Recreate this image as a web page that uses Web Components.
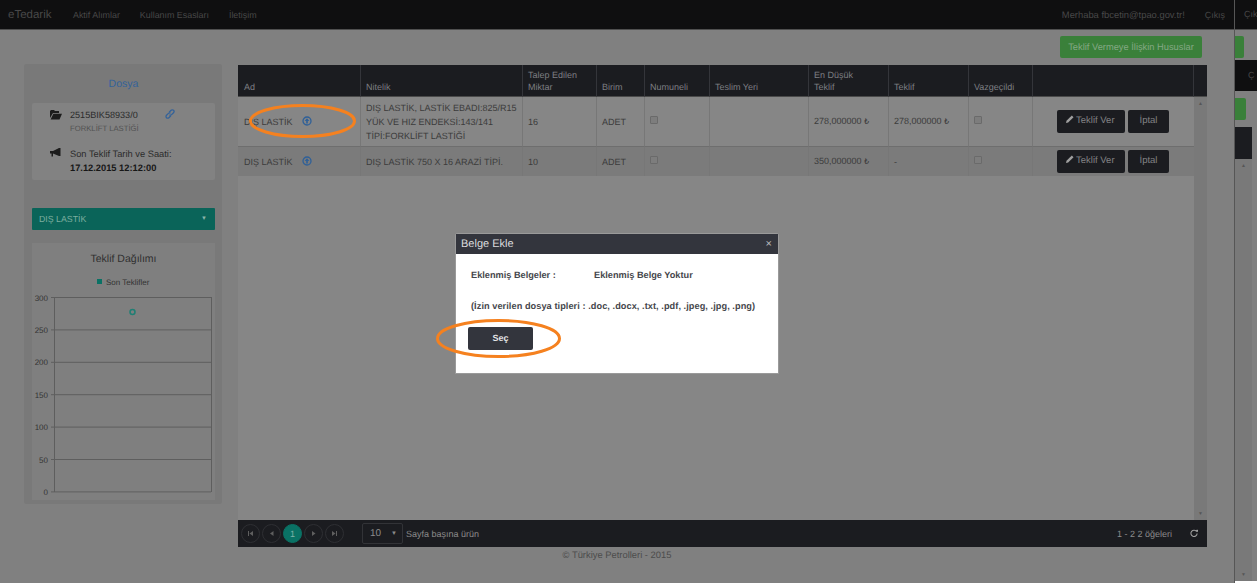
<!DOCTYPE html>
<html lang="tr">
<head>
<meta charset="utf-8">
<title>eTedarik</title>
<style>
  html, body { margin: 0; padding: 0; background: #808080; }
  body { font-family: "Liberation Sans", Arial, sans-serif; text-rendering: geometricPrecision; }
</style>
</head>
<body>
<app-shell></app-shell>
<script>
const icons = {
    folder: '<svg width="12" height="10" viewBox="0 0 12 10"><path fill="#1c1c1c" d="M1 0h3l1 1h4v2H3L0 8V1zM3.400 3.800H12L9.500 9.500H.6z"/></svg>',
    link: '<svg width="10" height="10" viewBox="0 0 10 10" fill="none" stroke="#33629a" stroke-width="1.300"><path d="M4.200 3.200 6.100 1.300a1.500 1.500 0 0 1 2.400 2.400L6.600 5.600a1.500 1.500 0 0 1-2.100.1"/><path d="M5.800 6.800 3.900 8.700a1.500 1.500 0 0 1-2.400-2.400l1.900-1.900a1.500 1.500 0 0 1 2.100-.1"/></svg>',
    bullhorn: '<svg width="11" height="9" viewBox="0 0 11 9"><path fill="#1c1c1c" d="M0 3h3l6-3h1.500v8H9L3 5.500v3H1.500v-3H0z"/></svg>',
    upload: '<svg width="10" height="10" viewBox="0 0 10 10"><circle cx="5" cy="5" r="4" fill="none" stroke="#2f6098" stroke-width="1.300"/><path fill="#2f6098" d="M5 2.300 7.300 5H5.800v2.500H4.200V5H2.700z"/></svg>',
    pencil: '<svg width="8" height="8" viewBox="0 0 8 8"><path fill="#a0a0a0" d="M0 8l.5-2.200L5.800.5l1.700 1.700L2.200 7.500z"/></svg>',
    refresh: '<svg width="8" height="9" viewBox="0 0 9 9" fill="none" stroke="#a0a0a0" stroke-width="1.200"><path d="M7.500 2.500A3.500 3.500 0 1 0 8 4.500"/><path fill="#a0a0a0" stroke="none" d="M6 .5 9 .2v3z"/></svg>'
}

class TopNav extends HTMLElement {
    constructor() {
        super()
        this.attachShadow({ mode: 'open' })
    }
    connectedCallback() {
        this.shadowRoot.innerHTML = `
            <style>
                :host {
                    display: flex;
                    align-items: center;
                    box-sizing: border-box;
                    height: 30px;
                    padding: 0 9px 0 8px;
                    background: #0f0f10;
                    border-bottom: 1px solid #4f4f4f;
                    color: #484848;
                    font-size: 8.900px;
                    white-space: nowrap;
                }
                .brand { font-size: 11.500px; width: 65px; }
                a { margin-right: 20px; }
                .spacer { flex: 1; }
                .user { margin-right: 20px; font-size: 9.400px; }
                a:last-child { margin-right: 0; }
            </style>
            <span class="brand">eTedarik</span>
            <a>Aktif Alımlar</a>
            <a>Kullanım Esasları</a>
            <a>İletişim</a>
            <span class="spacer"></span>
            <span class="user">Merhaba fbcetin@tpao.gov.tr!</span>
            <a>Çıkış</a>
        `
    }
}
customElements.define('top-nav', TopNav)

class GreenButton extends HTMLElement {
    constructor() {
        super()
        this.attachShadow({ mode: 'open' })
    }
    connectedCallback() {
        this.shadowRoot.innerHTML = `
            <style>
                :host {
                    display: inline-block;
                    box-sizing: border-box;
                    height: 22px;
                    width: 142px;
                    line-height: 22px;
                    text-align: center;
                    border-radius: 2px;
                    background: #3a803a;
                    color: #84a884;
                    font-size: 9.300px;
                    white-space: nowrap;
                }
            </style>
            <slot></slot>
        `
    }
}
customElements.define('green-button', GreenButton)

class DossierPanel extends HTMLElement {
    constructor() {
        super()
        this.attachShadow({ mode: 'open' })
    }
    connectedCallback() {
        this.shadowRoot.innerHTML = `
            <style>
                :host {
                    display: block;
                    box-sizing: border-box;
                    width: 198px;
                    height: 440px;
                    padding: 0 7px 0 8px;
                    background: #797979;
                    border-radius: 2px;
                    color: #2b2b2b;
                    font-size: 9.100px;
                }
                h2 {
                    margin: 0;
                    height: 39px;
                    line-height: 40px;
                    text-align: center;
                    font-size: 10.500px;
                    font-weight: normal;
                    color: #33629a;
                }
                .card {
                    box-sizing: border-box;
                    height: 77px;
                    padding: 6px 0 0 18px;
                    background: #828282;
                    border-radius: 2px;
                }
                .item { display: flex; position: relative; }
                .item .ic { width: 20px; flex: none; padding-top: 1px; }
                .item + .item { margin-top: 12px; }
                .code { line-height: 13px; }
                .sub { color: #525252; font-size: 7.700px; line-height: 13px; }
                .deadline { line-height: 14px; font-size: 9.300px; }
                .deadline b { color: #171717; }
                .link { position: absolute; left: 115px; top: 0; }
                .bar {
                    display: flex;
                    justify-content: space-between;
                    align-items: center;
                    box-sizing: border-box;
                    height: 22px;
                    margin-top: 28px;
                    padding: 0 8px 0 7px;
                    background: #0a6459;
                    border-radius: 1px;
                    color: #7cae9f;
                    font-size: 8.800px;
                }
                .caret { font-size: 6px; color: #8ab5aa; }
                .chart {
                    height: 257px;
                    margin-top: 13px;
                    background: #7f7f7f;
                }
                .chart h3 {
                    margin: 0;
                    height: 29px;
                    line-height: 32px;
                    text-align: center;
                    font-size: 10.500px;
                    font-weight: normal;
                    color: #2f2f2f;
                }
                svg.plot { display: block; }
                svg text { font-family: "Liberation Sans", Arial, sans-serif; font-size: 8px; fill: #333; }
            </style>
            <h2>Dosya</h2>
            <div class="card">
                <div class="item">
                    <span class="ic">${icons.folder}</span>
                    <div>
                        <div class="code">2515BIK58933/0</div>
                        <div class="sub">FORKLİFT LASTİĞİ</div>
                    </div>
                    <span class="link">${icons.link}</span>
                </div>
                <div class="item">
                    <span class="ic">${icons.bullhorn}</span>
                    <div class="deadline">Son Teklif Tarih ve Saati:<br><b>17.12.2015 12:12:00</b></div>
                </div>
            </div>
            <div class="bar"><span>DIŞ LASTİK</span><span class="caret">▼</span></div>
            <div class="chart">
                <h3>Teklif Dağılımı</h3>
                <svg class="plot" width="183" height="228" viewBox="0 0 183 228">
                    <rect x="65" y="7" width="5" height="5" fill="#0a7265"/>
                    <text x="74" y="12.500">Son Teklifler</text>
                    ${[0,1,2,3,4,5,6].map(i => {
                        const y = 25.5 + i * 32.4
                        const label = 300 - i * 50
                        return `<line x1="19" x2="179" y1="${y}" y2="${y}" stroke="#5e5e5e"/>
                                <text x="16" y="${y + 3}" text-anchor="end">${label}</text>`
                    }).join('')}
                    <line x1="22.500" x2="22.500" y1="25" y2="220" stroke="#5e5e5e"/>
                    <line x1="179.500" x2="179.500" y1="25" y2="220" stroke="#5e5e5e"/>
                    <circle cx="100.500" cy="40" r="2.500" fill="#7f7f7f" stroke="#1f7f74" stroke-width="1.500"/>
                </svg>
            </div>
        `
    }
}
customElements.define('dossier-panel', DossierPanel)

class PagerBar extends HTMLElement {
    constructor() {
        super()
        this.attachShadow({ mode: 'open' })
    }
    connectedCallback() {
        const glyph = d => `<svg width="5" height="5" viewBox="0 0 5 5"><path fill="#5f5f5f" d="${d}"/></svg>`
        this.shadowRoot.innerHTML = `
            <style>
                :host {
                    display: flex;
                    align-items: center;
                    box-sizing: border-box;
                    height: 27px;
                    padding: 0 9px 0 3px;
                    background: #1b1c20;
                    color: #8b8b8b;
                    font-size: 9px;
                }
                .pg {
                    display: flex;
                    align-items: center;
                    justify-content: center;
                    box-sizing: border-box;
                    width: 19px;
                    height: 19px;
                    margin-right: 2px;
                    border: 1px solid #2e2f33;
                    border-radius: 50%;
                }
                .pg.on { background: #0a7265; border-color: #0a7265; color: #7fb3a8; font-size: 9px; }
                .size {
                    display: flex;
                    justify-content: space-between;
                    align-items: center;
                    box-sizing: border-box;
                    width: 41px;
                    height: 21px;
                    margin: 0 3px 0 16px;
                    padding: 0 5px 0 7px;
                    border: 1px solid #323337;
                    border-radius: 2px;
                    font-size: 10px;
                }
                .size i { font-style: normal; font-size: 6px; }
                .spacer { flex: 1; }
                .count { margin-right: 18px; }
            </style>
            <span class="pg">${glyph('M0 0h1v5H0zM5 0v5L1.500 2.500z')}</span>
            <span class="pg">${glyph('M4.500 0v5L1 2.500z')}</span>
            <span class="pg on">1</span>
            <span class="pg">${glyph('M1 0v5l3.500-2.500z')}</span>
            <span class="pg">${glyph('M0 0v5l3.500-2.500zM4 0h1v5H4z')}</span>
            <span class="size">10<i>▼</i></span>
            <span>Sayfa başına ürün</span>
            <span class="spacer"></span>
            <span class="count">1 - 2 2 öğeleri</span>
            ${icons.refresh}
        `
    }
}
customElements.define('pager-bar', PagerBar)

class ScrollTrack extends HTMLElement {
    constructor() {
        super()
        this.attachShadow({ mode: 'open' })
    }
    connectedCallback() {
        this.shadowRoot.innerHTML = `
            <style>
                :host {
                    display: flex;
                    flex-direction: column;
                    justify-content: space-between;
                    align-items: center;
                    box-sizing: border-box;
                    padding: 4px 0 3px;
                    background: #797979;
                    color: #565656;
                    font-size: 5px;
                    line-height: 6px;
                }
            </style>
            <span>▲</span><span>▼</span>
        `
    }
}
customElements.define('scroll-track', ScrollTrack)

class OfferTable extends HTMLElement {
    constructor() {
        super()
        this.attachShadow({ mode: 'open' })
    }
    connectedCallback() {
        const rows = [
            { nitelik: 'DIŞ LASTİK, LASTİK EBADI:825/R15 YÜK VE HIZ ENDEKSİ:143/141 TİPİ:FORKLİFT LASTİĞİ', miktar: '16', low: '278,000000 ₺', offer: '278,000000 ₺', cls: 'a' },
            { nitelik: 'DIŞ LASTİK 750 X 16 ARAZİ TİPİ.', miktar: '10', low: '350,000000 ₺', offer: '-', cls: 'b' }
        ]
        const heads = ['Ad', 'Nitelik', 'Talep Edilen Miktar', 'Birim', 'Numuneli', 'Teslim Yeri', 'En Düşük<br>Teklif', 'Teklif', 'Vazgeçildi', '', '']
        const widths = [123, 162, 74, 48, 65, 99, 80, 80, 64, 161, 13]
        this.shadowRoot.innerHTML = `
            <style>
                :host {
                    display: flex;
                    flex-direction: column;
                    box-sizing: border-box;
                    height: 482px;
                    background: #868686;
                    color: #3b3b3b;
                    font-size: 9px;
                }
                table {
                    align-self: flex-start;
                    table-layout: fixed;
                    border-collapse: separate;
                    border-spacing: 0;
                    width: 969px;
                }
                th {
                    box-sizing: border-box;
                    height: 32px;
                    padding: 0 4px 3px 5px;
                    vertical-align: bottom;
                    text-align: left;
                    font-weight: normal;
                    line-height: 12px;
                    color: #7d7e82;
                    background: #1b1c20;
                    border-right: 1px solid #34353a;
                    border-bottom: 1px solid #4a4a4a;
                }
                th:first-child { padding-left: 6px; }
                th:last-child { border-right: 0; }
                td {
                    box-sizing: border-box;
                    padding: 0 1px 0 5px;
                    vertical-align: middle;
                    line-height: 14px;
                    border-right: 1px solid #777;
                    border-bottom: 1px solid #6e6e6e;
                }
                tr.a td { height: 50px; background: #868686; }
                tr.b td { height: 29px; background: #7b7b7b; border-bottom: 0; }
                td.ad { padding-left: 6px; }
                td.ad svg { margin-left: 7px; vertical-align: -1.500px; }
                td.act { border-right: 0; text-align: left; padding: 0 0 0 24px; white-space: nowrap; }
                .cb {
                    display: block;
                    box-sizing: border-box;
                    width: 8px;
                    height: 8px;
                    margin-bottom: 3px;
                    background: #7d7d7d;
                    border: 1px solid #6a6a6a;
                    border-radius: 1px;
                }
                .btn {
                    display: inline-block;
                    box-sizing: border-box;
                    height: 23px;
                    line-height: 22px;
                    padding: 0 9px;
                    margin-right: 3px;
                    background: #1b1c20;
                    border-radius: 2px;
                    color: #828284;
                    font-size: 9.500px;
                }
                .btn svg { margin-right: 2px; }
                .btn.wide { width: 68px; }
                .btn.narrow { width: 41px; padding: 0; text-align: center; }
                .body { position: relative; flex: 1; display: flex; min-height: 0; }
                scroll-track { position: absolute; right: 0; top: 32px; bottom: 0; width: 13px; }
                td.scroll { padding: 0; border: 0; background: transparent !important; }
                .lira { font-family: "DejaVu Sans", "Liberation Sans", sans-serif; font-size: 8px; }
            </style>
            <div class="body">
                <table>
                    <colgroup>${widths.map(w => `<col style="width:${w}px">`).join('')}</colgroup>
                    <thead><tr>${heads.map(h => `<th>${h}</th>`).join('')}</tr></thead>
                    <tbody>
                        ${rows.map(r => `
                            <tr class="${r.cls}">
                                <td class="ad">DIŞ LASTİK ${icons.upload}</td>
                                <td>${r.nitelik}</td>
                                <td>${r.miktar}</td>
                                <td>ADET</td>
                                <td><span class="cb"></span></td>
                                <td></td>
                                <td>${this.money(r.low)}</td>
                                <td>${this.money(r.offer)}</td>
                                <td><span class="cb"></span></td>
                                <td class="act"><span class="btn wide">${icons.pencil}Teklif Ver</span><span class="btn narrow">İptal</span></td>
                                <td class="scroll"></td>
                            </tr>`).join('')}
                    </tbody>
                </table>
                <scroll-track></scroll-track>
            </div>
            <pager-bar></pager-bar>
        `
    }
    money(v) {
        return v.replace('₺', '<span class="lira">₺</span>')
    }
}
customElements.define('offer-table', OfferTable)

class UploadModal extends HTMLElement {
    constructor() {
        super()
        this.attachShadow({ mode: 'open' })
    }
    connectedCallback() {
        this.shadowRoot.innerHTML = `
            <style>
                :host {
                    position: absolute;
                    left: 456px;
                    top: 234px;
                    width: 322px;
                    height: 139px;
                    background: #fff;
                    border-radius: 2px 2px 0 0;
                    box-shadow: 0 0 0 1px #9a9a9a;
                    color: #45464b;
                    font-size: 9.200px;
                    font-weight: bold;
                }
                header {
                    display: flex;
                    justify-content: space-between;
                    align-items: center;
                    height: 20px;
                    padding: 0 6px 0 5px;
                    background: #33353d;
                    color: #dcdcde;
                    font-size: 11px;
                    font-weight: normal;
                }
                header span:last-child { font-size: 11px; color: #b9b9bb; }
                .body { padding: 16px 15px 0; }
                .line { display: flex; height: 10px; line-height: 10px; white-space: nowrap; }
                .line span:first-child { width: 123px; }
                .types { margin-top: 21px; height: 10px; line-height: 10px; white-space: nowrap; letter-spacing: .06px; }
                .pick {
                    width: 65px;
                    height: 23px;
                    line-height: 23px;
                    margin: 16px 0 0 -3px;
                    text-align: center;
                    background: #33353d;
                    border-radius: 2px;
                    color: #e4e4e6;
                    font-size: 9px;
                }
            </style>
            <header><span>Belge Ekle</span><span>×</span></header>
            <div class="body">
                <div class="line"><span>Eklenmiş Belgeler :</span><span>Eklenmiş Belge Yoktur</span></div>
                <div class="types">(İzin verilen dosya tipleri : .doc, .docx, .txt, .pdf, .jpeg, .jpg, .png)</div>
                <div class="pick">Seç</div>
            </div>
        `
    }
}
customElements.define('upload-modal', UploadModal)

class RingMark extends HTMLElement {
    constructor() {
        super()
        this.attachShadow({ mode: 'open' })
    }
    connectedCallback() {
        const w = +this.getAttribute('w')
        const h = +this.getAttribute('h')
        this.shadowRoot.innerHTML = `
            <style>
                :host {
                    position: absolute;
                    left: ${this.getAttribute('x')}px;
                    top: ${this.getAttribute('y')}px;
                    width: ${w}px;
                    height: ${h}px;
                    pointer-events: none;
                }
                svg { display: block; }
            </style>
            <svg width="${w}" height="${h}"><ellipse cx="${w / 2}" cy="${h / 2}" rx="${w / 2 - 1.5}" ry="${h / 2 - 1.5}" fill="none" stroke="#f5811f" stroke-width="3"/></svg>
        `
    }
}
customElements.define('ring-mark', RingMark)

class SideSliver extends HTMLElement {
    constructor() {
        super()
        this.attachShadow({ mode: 'open' })
    }
    connectedCallback() {
        this.shadowRoot.innerHTML = `
            <style>
                :host {
                    display: flex;
                    flex-direction: column;
                    align-items: flex-start;
                    width: 22px;
                    height: 583px;
                    overflow: hidden;
                    color: #484848;
                    font-size: 8.900px;
                }
                .nav { align-self: stretch; box-sizing: border-box; height: 30px; padding: 9px 0 0 9px; background: #0f0f10; border-bottom: 1px solid #4f4f4f; white-space: nowrap; }
                .g { background: #3a803a; height: 22px; border-radius: 0 2px 2px 0; }
                .g1 { width: 9px; margin-top: 6px; }
                .black { align-self: stretch; box-sizing: border-box; height: 31px; margin-top: 2px; padding: 10px 0 0 13px; background: #0f0f10; }
                .g2 { width: 11px; margin-top: 7px; }
                .head { width: 17px; height: 32px; margin-top: 7px; background: #1b1c20; }
                scroll-track { width: 17px; flex: 1; }
                .white { align-self: stretch; height: 2px; background: #fff; }
            </style>
            <div class="nav">Çık</div>
            <div class="g g1"></div>
            <div class="black">Ç</div>
            <div class="g g2"></div>
            <div class="head"></div>
            <scroll-track></scroll-track>
            <div class="white"></div>
        `
    }
}
customElements.define('side-sliver', SideSliver)

class AppShell extends HTMLElement {
    constructor() {
        super()
        this.attachShadow({ mode: 'open' })
    }
    connectedCallback() {
        this.shadowRoot.innerHTML = `
            <style>
                :host {
                    display: flex;
                    position: relative;
                    width: 1257px;
                    height: 583px;
                    overflow: hidden;
                    background: #808080;
                }
                .window {
                    box-sizing: border-box;
                    width: 1235px;
                    height: 583px;
                    border-right: 1px solid #565656;
                }
                .content { padding: 6px 27px 0 24px; }
                .actions { display: flex; justify-content: flex-end; padding-right: 5px; height: 22px; }
                .columns { display: flex; align-items: flex-start; gap: 16px; margin-top: 6px; }
                offer-table { flex: 1; margin-top: 1px; }
                footer {
                    margin-top: 2px;
                    text-align: center;
                    color: #4c4c4c;
                    font-size: 9.400px;
                    line-height: 12px;
                }
            </style>
            <div class="window">
                <top-nav></top-nav>
                <div class="content">
                    <div class="actions"><green-button>Teklif Vermeye İlişkin Hususlar</green-button></div>
                    <div class="columns">
                        <dossier-panel></dossier-panel>
                        <offer-table></offer-table>
                    </div>
                </div>
                <footer>© Türkiye Petrolleri - 2015</footer>
            </div>
            <side-sliver></side-sliver>
            <upload-modal></upload-modal>
            <ring-mark x="249" y="104" w="107" h="34"></ring-mark>
            <ring-mark x="436" y="319" w="125" h="39"></ring-mark>
        `
    }
}
customElements.define('app-shell', AppShell)
</script>
</body>
</html>
